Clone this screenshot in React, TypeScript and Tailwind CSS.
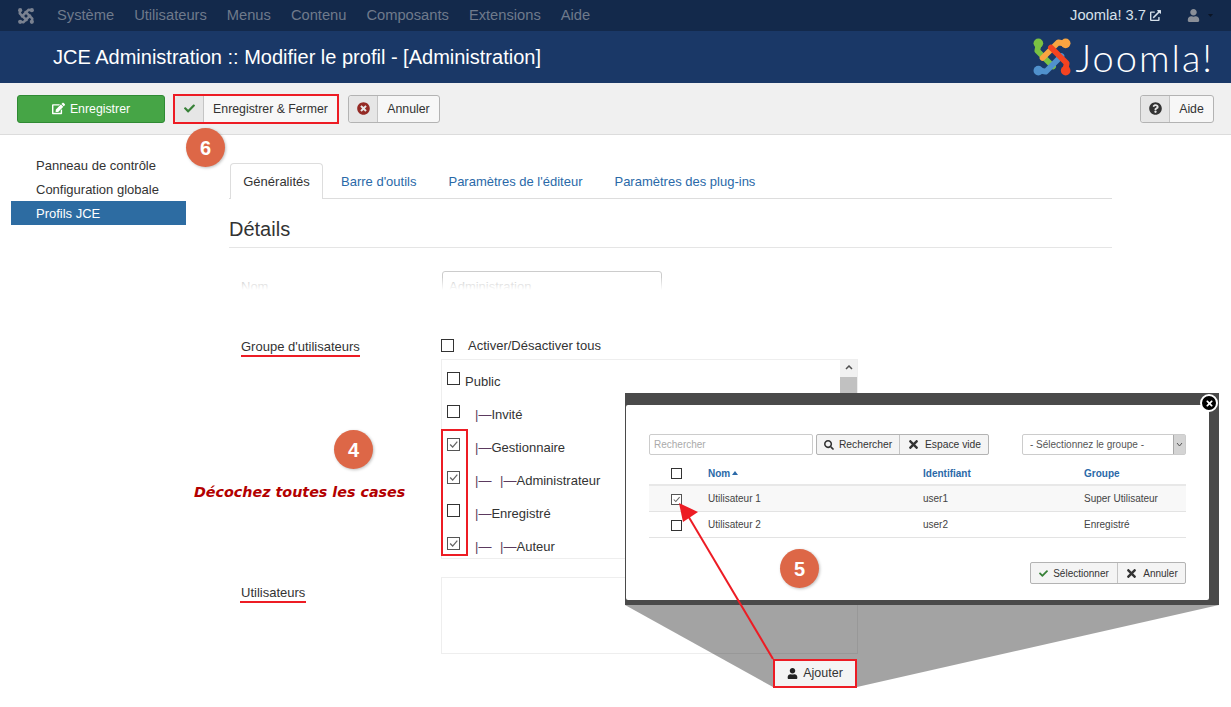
import type { ReactNode } from "react";
import {
  FaCheck,
  FaEdit,
  FaExternalLinkAlt,
  FaQuestionCircle,
  FaSearch,
  FaTimes,
  FaTimesCircle,
  FaUser,
} from "react-icons/fa";

const menus = ["Système", "Utilisateurs", "Menus", "Contenu", "Composants", "Extensions", "Aide"];
const tabs = ["Barre d'outils", "Paramètres de l'éditeur", "Paramètres des plug-ins"];

const groups = [
  { label: "Public", prefix: "", checked: false },
  { label: "Invité", prefix: "|—", checked: false },
  { label: "Gestionnaire", prefix: "|—", checked: true },
  { label: "Administrateur", prefix: "|—   |—", checked: true },
  { label: "Enregistré", prefix: "|—", checked: false },
  { label: "Auteur", prefix: "|—   |—", checked: true },
];

const users = [
  { name: "Utilisateur 1", id: "user1", group: "Super Utilisateur", checked: true },
  { name: "Utilisateur 2", id: "user2", group: "Enregistré", checked: false },
];

// one woven arm of the logo, rotated four times
const JoomlaMark = ({ size, colors }: { size: number; colors: string[] }) => (
  <svg width={size} height={size} viewBox="0 0 40 40" fill="none">
    {[0, 90, 270, 180].map((angle, i) => (
      <g key={angle} transform={`rotate(${angle} 20 20)`} stroke={colors[i]} strokeWidth="5.5" strokeLinecap="round">
        <circle cx="7" cy="7" r="4.6" fill={colors[i]} stroke="none" />
        <path d="M7 9 L6 14 L21 29" strokeLinejoin="round" />
      </g>
    ))}
  </svg>
);

const Checkbox = ({ checked, size = 13 }: { checked?: boolean; size?: number }) => (
  <div
    className={`shrink-0 border bg-white ${checked ? "border-[#555]" : "border-[#333]"}`}
    style={{ width: size, height: size }}
  >
    {checked && (
      <svg viewBox="0 0 13 13" className="w-full h-full" fill="none">
        <path d="M2.5 6.5 L5.5 9.5 L11 3" stroke="#666" strokeWidth="1.5" />
      </svg>
    )}
  </div>
);

const IconButton = ({ icon, label, width }: { icon: ReactNode; label: string; width: string }) => (
  <button className={`h-7 flex items-stretch rounded-[3px] border border-[#b3b3b3] bg-[#f7f7f7] text-[12.3px] text-[#333] ${width}`}>
    <span className="w-[29px] shrink-0 flex items-center justify-center bg-[#e6e6e6] border-r border-[#c4c4c4] rounded-l-[3px]">
      {icon}
    </span>
    <span className="flex-1 flex items-center justify-center whitespace-nowrap pt-[2px]">{label}</span>
  </button>
);

const Step = ({ n, className }: { n: number; className: string }) => (
  <div
    className={`absolute z-40 w-[39px] h-[39px] rounded-full bg-[#dd6747] text-white text-[20px] font-bold flex items-center justify-center shadow-[1px_1px_3px_rgba(0,0,0,0.25)] ${className}`}
  >
    {n}
  </div>
);

const UserPicker = () => (
  <div className="absolute z-10 left-[625px] top-[393px] w-[594px] h-[212px] bg-[#4a4a4a] pt-[12px] pl-px pr-[10px] pb-[5px]">
    <div className="h-full bg-white rounded-[2px] px-[23px] pt-[29px] text-[10px] text-[#444]">
      <div className="flex items-center h-[21px]">
        <div className="w-[164px] h-full border border-[#ccc] rounded-[2px] flex items-center px-[4px] text-[#aaa]">
          Rechercher
        </div>
        <div className="ml-[3px] h-full flex border border-[#b3b3b3] rounded-[2px] bg-[#f4f4f4] text-[#333] text-[10.3px]">
          <span className="w-[83px] flex items-center justify-center gap-[5px] border-r border-[#c4c4c4]">
            <FaSearch size={10} /> Rechercher
          </span>
          <span className="w-[88px] flex items-center justify-center gap-[5px]">
            <FaTimes size={13} /> Espace vide
          </span>
        </div>
        <div className="ml-auto w-[164px] h-full border border-[#ccc] rounded-[2px] flex items-center justify-between pl-[7px] text-[#555]">
          - Sélectionnez le groupe -
          <span className="w-[12px] h-full bg-[#d4d4d4] border-l border-[#aaa] flex items-center justify-center">
            <svg width="7" height="5" viewBox="0 0 7 5" fill="none">
              <path d="M1 1 L3.5 4 L6 1" stroke="#555" />
            </svg>
          </span>
        </div>
      </div>
      <div className="mt-[7px] grid grid-cols-[59px_215px_161px_1fr] items-center h-[24px] font-bold text-[#2a69a8] border-b-2 border-[#e8e8e8]">
        <span className="pl-[22px]">
          <Checkbox size={11} />
        </span>
        <span className="flex items-center gap-[2px]">
          Nom
          <svg width="6" height="4" viewBox="0 0 6 4">
            <path d="M3 0 L6 4 L0 4 Z" fill="#2a69a8" />
          </svg>
        </span>
        <span>Identifiant</span>
        <span>Groupe</span>
      </div>
      {users.map((user) => (
        <div
          key={user.id}
          className={`grid grid-cols-[59px_215px_161px_1fr] items-center h-[26px] border-b border-[#e3e3e3] ${user.checked ? "bg-[#f8f8f8]" : ""}`}
        >
          <span className="pl-[22px] pt-[2px]">
            <Checkbox size={11} checked={user.checked} />
          </span>
          <span>{user.name}</span>
          <span>{user.id}</span>
          <span>{user.group}</span>
        </div>
      ))}
      <div className="mt-[24px] flex justify-end">
        <div className="h-[22px] flex border border-[#b3b3b3] rounded-[2px] bg-[#f4f4f4] text-[#333]">
          <span className="w-[87px] flex items-center justify-center gap-[5px] border-r border-[#c4c4c4]">
            <FaCheck size={9} className="text-[#378137]" /> Sélectionner
          </span>
          <span className="w-[67px] flex items-center justify-center gap-[5px]">
            <FaTimes size={13} /> Annuler
          </span>
        </div>
      </div>
    </div>
    <div className="absolute right-[1px] top-[1px] w-[18px] h-[18px] rounded-full bg-black border-2 border-white flex items-center justify-center">
      <FaTimes size={9} className="text-white" />
    </div>
  </div>
);

export default function App() {
  return (
    <div className="relative w-[1231px] h-[707px] overflow-hidden bg-white text-[#333] text-[13px] font-['Liberation_Sans',Arial,sans-serif]">
      {/* NAV */}
      <div className="h-[31px] bg-[#13294b] flex items-center pl-[17px] pr-[18px] text-[14.7px] text-[#6f7a8b]">
        <JoomlaMark size={18} colors={["#7a8291", "#7a8291", "#7a8291", "#7a8291"]} />
        <div className="ml-[22px] flex gap-[20px]">
          {menus.map((menu) => (
            <span key={menu}>{menu}</span>
          ))}
        </div>
        <span className="ml-auto text-[#d6e0ea] flex items-center gap-[4px]">
          Joomla! 3.7 <FaExternalLinkAlt size={11} />
        </span>
        <span className="ml-[26px] flex items-center gap-[8px] text-[#8a8f98]">
          <FaUser size={13} />
          <svg width="5" height="3" viewBox="0 0 5 3">
            <path d="M0 0 L5 0 L2.5 3 Z" fill="#0b1424" />
          </svg>
        </span>
      </div>

      {/* HEADER */}
      <div className="h-[52px] bg-[#1a3867] flex items-center pl-[53px] pr-[17px] text-white">
        <h1 className="text-[20px]">JCE Administration :: Modifier le profil - [Administration]</h1>
        <div className="ml-auto flex items-center gap-[3px]">
          <JoomlaMark size={42} colors={["#7ac143", "#f9a541", "#5091cd", "#f44321"]} />
          <span className="text-[38px] leading-none font-['Lato',sans-serif] font-light tracking-[2px]">Joomla!</span>
        </div>
      </div>

      {/* TOOLBAR */}
      <div className="h-[52px] bg-[#f0f0f0] border-b border-[#dcdcdc] flex items-center pl-[17px] pr-[17px]">
        <button className="w-[148px] h-7 rounded-[3px] border border-[#2f8a33] bg-[#46a546] text-white text-[12.3px] flex items-center justify-center gap-[5px]">
          <FaEdit size={13} /> <span className="pt-[2px]">Enregistrer</span>
        </button>
        <div className="ml-[8px] border-2 border-[#ed1c24] flex h-[30px]">
          <IconButton icon={<FaCheck size={11} className="text-[#378137]" />} label="Enregistrer & Fermer" width="w-[162px] border-0 h-full" />
        </div>
        <div className="ml-[9px]">
          <IconButton icon={<FaTimesCircle size={13} className="text-[#942a25]" />} label="Annuler" width="w-[92px]" />
        </div>
        <div className="ml-auto">
          <IconButton icon={<FaQuestionCircle size={13} className="text-[#333]" />} label="Aide" width="w-[74px]" />
        </div>
      </div>

      {/* MAIN */}
      <div className="flex">
        <div className="ml-[11px] w-[175px] pt-[18px] shrink-0">
          <div className="h-6 pl-[25px] pt-px flex items-center">Panneau de contrôle</div>
          <div className="h-6 pl-[25px] pt-px flex items-center">Configuration globale</div>
          <div className="h-6 pl-[25px] pt-px flex items-center bg-[#2d6ca2] text-white">Profils JCE</div>
        </div>

        <div className="ml-[43px] w-[883px] pt-[28px]">
          {/* TABS */}
          <div className="h-[36px] flex border-b border-[#ddd] pl-px">
            <div className="w-[93px] h-[36px] pt-px flex items-center justify-center bg-white border border-b-0 border-[#ddd] rounded-t-[4px]">
              Généralités
            </div>
            {tabs.map((tab) => (
              <div key={tab} className="px-[14px] ml-[4px] h-[36px] pt-px flex items-center text-[#2a69a8]">
                {tab}
              </div>
            ))}
          </div>

          <h2 className="mt-[16px] h-[33px] text-[20px] leading-[28px] border-b border-[#e5e5e5] text-[#333]">Détails</h2>

          {/* NOM */}
          <div className="relative mt-[23px] h-[19px] overflow-hidden grid grid-cols-[213px_220px] text-[#bbb]">
            <span className="pl-[12px] pt-[6px]">Nom</span>
            <span className="border border-[#ccc] rounded-t-[3px] px-[6px] pt-[5px]">Administration</span>
            <div className="absolute inset-x-0 bottom-0 h-[12px] bg-gradient-to-b from-white/10 to-white" />
          </div>

          {/* GROUPES */}
          <div className="mt-[48px] grid grid-cols-[212px_417px]">
            <div className="-mt-px">
              <span className="ml-[12px] inline-block border-b-2 border-[#ed1c24] pb-px leading-[14px] text-[#333]">
                Groupe d'utilisateurs
              </span>
            </div>
            <div>
              <div className="flex items-center gap-[14px] h-[14px]">
                <Checkbox />
                <span className="pt-px">Activer/Désactiver tous</span>
              </div>
              <div className="mt-[7px] h-[200px] border border-[#eee] flex overflow-hidden">
                <div className="flex-1 pl-[5px] pt-[12px]">
                  {groups.map((g) => (
                    <div key={g.label} className="h-[33px] flex items-start">
                      <Checkbox checked={g.checked} />
                      <span className={`pt-px leading-[18px] whitespace-pre ${g.prefix ? "ml-[15px]" : "ml-[5px]"}`}>
                        <span className="text-[#5b3a5e] [word-spacing:-0.7px]">{g.prefix}</span>
                        {g.label}
                      </span>
                    </div>
                  ))}
                </div>
                <div className="w-[17px] bg-[#f1f1f1] flex flex-col items-center pt-[5px]">
                  <svg width="8" height="5" viewBox="0 0 8 5" fill="none">
                    <path d="M1 4 L4 1 L7 4" stroke="#505050" strokeWidth="1.5" />
                  </svg>
                  <div className="mt-[7px] w-full h-[60px] bg-[#c1c1c1]" />
                </div>
              </div>
            </div>
          </div>

          {/* UTILISATEURS */}
          <div className="mt-[18px] grid grid-cols-[212px_417px]">
            <div className="pt-[6px]">
              <span className="ml-[11px] px-px inline-block border-b-2 border-[#ed1c24] pb-px leading-[14px]">Utilisateurs</span>
            </div>
            <div>
              <div className="h-[77px] border border-[#eee]" />
              <div className="mt-[5px] flex justify-end pr-px">
                <button className="relative z-20 w-[84px] h-[29px] border-2 border-[#ed1c24] bg-[#f4f4f4] text-[12.5px] flex items-center justify-center gap-[5px]">
                  <FaUser size={11} className="text-[#222]" /> Ajouter
                </button>
              </div>
            </div>
          </div>
        </div>
      </div>

      {/* ZOOM WEDGE + POPUP */}
      <svg className="absolute inset-0 z-10 pointer-events-none" width="1231" height="707">
        <path d="M625 605 L773 687 L857 687 L1219 605 Z" fill="rgba(0,0,0,0.36)" />
      </svg>
      <UserPicker />

      {/* ANNOTATIONS */}
      <div className="absolute z-30 left-[441px] top-[429px] w-[27px] h-[127px] border-2 border-[#ed1c24]" />
      <svg className="absolute inset-0 z-30 pointer-events-none" width="1231" height="707">
        <path d="M773 659 L687 514" stroke="#ed1c24" strokeWidth="2" />
        <path d="M679 503 L698 512 L683 522 Z" fill="#ed1c24" />
      </svg>
      <Step n={6} className="left-[186px] top-[128px]" />
      <Step n={4} className="left-[334px] top-[430px]" />
      <Step n={5} className="left-[780px] top-[549px]" />
      <div className="absolute z-30 left-[194px] top-[482px] text-[14.3px] leading-[20px] font-bold italic text-[#b30000] font-['DejaVu_Sans',sans-serif] whitespace-nowrap">
        Décochez toutes les cases
      </div>
    </div>
  );
}
